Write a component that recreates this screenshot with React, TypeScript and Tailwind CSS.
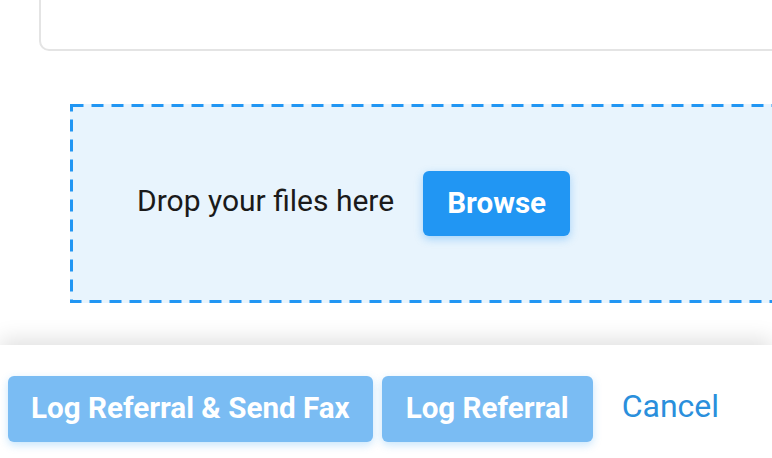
import React from "react";

export default function App() {
  return (
    <div
      className="w-[772px] h-[458px] overflow-hidden bg-white flex flex-col"
      style={{ fontFamily: "Roboto, 'Liberation Sans', sans-serif" }}
    >
      <div className="h-[345px] shrink-0 overflow-hidden pl-[39px]">
        <div className="mt-[-30px] h-[81px] w-[800px] rounded-[10px] border-2 border-[#e4e4e4] bg-white" />
        <div className="relative mt-[53px] ml-[31px] h-[199px] w-[760px] bg-[#e8f4fd] flex items-center pl-[67px]">
          <svg className="absolute inset-0 pointer-events-none" width="760" height="199">
            <rect
              x="1.5"
              y="1.5"
              width="757"
              height="196"
              fill="none"
              stroke="#2196f3"
              strokeWidth="3"
              strokeDasharray="12 8"
            />
          </svg>
          <span className="text-[30px] text-[#1a1a1a] -translate-y-[3px]">Drop your files here</span>
          <button className="ml-[29px] h-[65px] px-[24px] rounded-[6px] bg-[#2196f3] text-white font-bold text-[29.6px] shadow-[0_3px_8px_rgba(33,150,243,0.35)]">
            Browse
          </button>
        </div>
      </div>
      <div className="flex-1 bg-white shadow-[0_-6px_20px_rgba(0,0,0,0.12)] relative flex items-start pt-[31px] pl-[8px]">
        <button className="h-[66px] px-[23px] rounded-[6px] bg-[#7abcf3] text-white font-bold text-[29.6px] leading-none shadow-[0_3px_8px_rgba(33,150,243,0.25)]">
          Log Referral &amp; Send Fax
        </button>
        <button className="ml-[9px] h-[66px] px-[24px] rounded-[6px] bg-[#7abcf3] text-white font-bold text-[29.6px] leading-none shadow-[0_3px_8px_rgba(33,150,243,0.25)]">
          Log Referral
        </button>
        <span className="ml-[29px] h-[60px] flex items-center text-[32px] text-[#2a8fdc]">Cancel</span>
      </div>
    </div>
  );
}
